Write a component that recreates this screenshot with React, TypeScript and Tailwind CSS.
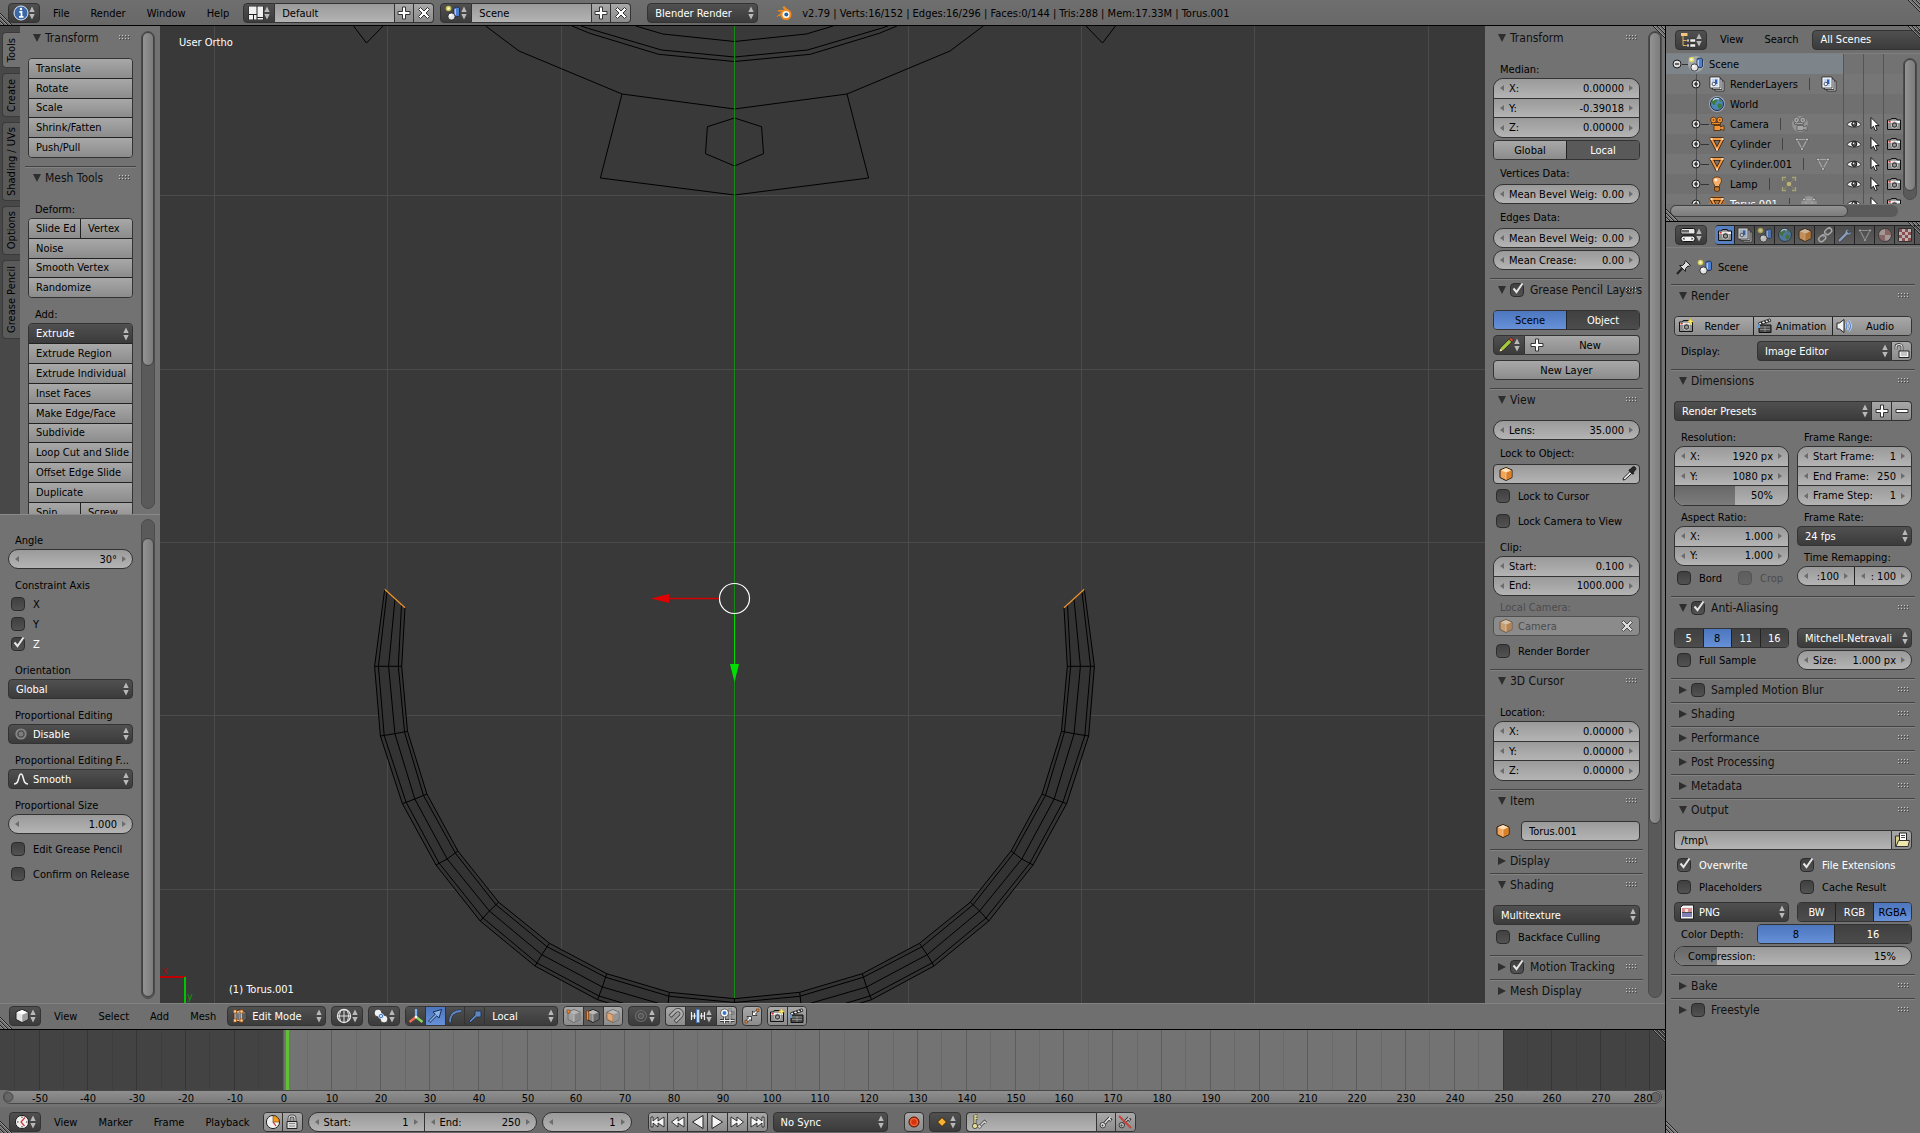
import type { ReactNode } from 'react';
import clsx from 'clsx';

/* ---------- icons ---------- */

const Svg = ({ children, className = '' }: { children: ReactNode; className?: string }) => (
  <svg viewBox="0 0 16 16" className={clsx('h-4 w-4 shrink-0', className)} fill="none" aria-hidden="true">
    {children}
  </svg>
);

const UpDown = () => (
  <svg viewBox="0 0 6 14" className="pointer-events-none h-3.5 w-1.5 shrink-0" aria-hidden="true">
    <path d="M3 .5 5.700 6H.3ZM3 13.500 5.700 8H.3Z" fill="#b9b9b9" />
  </svg>
);

const ballsAndCylinder = (
  <>
    <path d="M9 3.200c0-1.400 5.500-1.400 5.500 0v7.300c0 1.400-5.500 1.400-5.500 0z" fill="#4f7fd0" stroke="#15233f" strokeWidth=".8" />
    <path d="M10.200 4v6" stroke="#b9d0f7" strokeWidth="1.400" />
    <circle cx="6.500" cy="11.500" r="3.600" fill="#e4e4e4" stroke="#222" strokeWidth=".8" />
    <circle cx="5.500" cy="10.300" r="1.300" fill="#fff" />
    <circle cx="3.500" cy="3.500" r="2.800" fill="#f3ea5a" opacity=".75" />
    <circle cx="3.500" cy="3.500" r="1.300" fill="#fffbd0" />
  </>
);

const layers = (
  <>
    <path d="M6 5h9v10H6z" fill="#cfcfcf" stroke="#222" strokeWidth=".8" />
    <path d="M3.500 3h9.500v10.500H3.500z" fill="#e6e6e6" stroke="#222" strokeWidth=".8" />
    <path d="M1 1h10v11H1z" fill="#fff" stroke="#222" strokeWidth=".8" />
    <path d="M2.500 2.500h7v8h-7z" fill="#c3d6f2" />
    <path d="M6 3.500h2.300v4.500H6z" fill="#2d5fae" />
    <circle cx="4.800" cy="8" r="1.700" fill="#fff" stroke="#223" strokeWidth=".7" />
  </>
);

const globe = (
  <>
    <circle cx="8" cy="8" r="6.500" fill="#4d86b8" stroke="#1d2c3d" />
    <path d="M4 4c2-2 4-1 4 .5S6 6 6 8 4 9 3 7s0-2 1-3zM9 8c2-1 4 0 4 1.500S11 13 10 12.500 8 9 9 8zM10 3l2.500 1.500L11 6z" fill="#3f7a3c" />
    <path d="M4 4.500C5.500 2.500 8 2 10 3" stroke="#d5e6f5" strokeWidth="1.200" />
  </>
);

const photoCam = (
  <>
    <path d="M1.500 4h3l.8-1.500h5L11 4h3.500v9.500h-13z" fill="#8f8f8f" stroke="#111" />
    <path d="M2 4.800h12v2.200H2z" fill="#f4f4f4" />
    <circle cx="8.500" cy="9" r="3.200" fill="#3a3a3a" stroke="#ddd" strokeWidth=".8" />
    <circle cx="8.500" cy="9" r="1.500" fill="#9b9b9b" />
    <path d="M2.500 5h2.200v1.600H2.500z" fill="#e02a1f" />
  </>
);

const triMesh = (stroke: string, dot: string) => (
  <>
    <path d="M3 3.500h10L8 13z" stroke={stroke} strokeWidth="1.200" />
    <path d="M1.800 2.300h2.400v2.400H1.800zM11.800 2.300h2.400v2.400h-2.400zM6.800 11.800h2.400v2.400H6.800z" fill={dot} stroke="#333" strokeWidth=".5" />
  </>
);

const boxShape = (top: string, left: string, right: string, edge = '#2b1a08') => (
  <>
    <path d="M8 1.500 14 4v7.500L8 14.500 2 11.500V4z" fill={left} stroke={edge} />
    <path d="M8 7v7l5.500-2.800V4.500z" fill={right} />
    <path d="M8 2 13 4.200 8 6.500 3 4.200z" fill={top} />
    <path d="M8 7v6.500" stroke="#fff" opacity=".6" strokeWidth=".7" />
  </>
);

const clapper = (
  <>
    <path d="M2 7h12v7.500H2z" fill="#4a4a4a" stroke="#111" />
    <path d="M3 9h10M3 11.500h10M8 8v6" stroke="#9a9a9a" strokeWidth=".8" />
    <path d="M1.500 4.800 13 .8l.9 2.400L2.300 7.200z" fill="#f4f4f4" stroke="#111" strokeWidth=".8" />
    <path d="m4 4 1.500 2M7.500 3 9 4.800M10.500 2 12 3.500" stroke="#111" strokeWidth="1.300" />
    <path d="M1 6.500h2v3.500H1z" fill="#5a9be0" />
  </>
);

const keyShape = (c: string) => (
  <>
    <path d="m6 10 6-6.500m-1 1 2.500 2" stroke="#222" strokeWidth="3" />
    <path d="m6 10 6.500-7m-1.500 1.700 2 1.800" stroke={c} strokeWidth="1.600" />
    <circle cx="4.800" cy="11.200" r="2.700" fill={c} stroke="#222" strokeWidth=".8" />
    <circle cx="4.500" cy="11.500" r="1" fill="#444" />
  </>
);

const movieCam = (c: string, dark: string) => (
  <>
    <path d="M2.500 8.500h9v-2h-9zM5 9.500h6.500V11L15 9.500v5L11.500 13v1.500H5z" fill={c} stroke={dark} strokeWidth=".8" />
    <circle cx="4.500" cy="4" r="2.900" fill={c} stroke={dark} strokeWidth=".8" />
    <circle cx="10.800" cy="4" r="2.900" fill={c} stroke={dark} strokeWidth=".8" />
    <circle cx="4.500" cy="4" r=".8" fill={dark} />
    <circle cx="10.800" cy="4" r=".8" fill={dark} />
  </>
);

const icons = {
  info: (
    <>
      <circle cx="8" cy="8" r="7" fill="#3d68a8" stroke="#dfe8f5" />
      <path d="M6.300 6.800h2.200v4.700M6 11.800h4.500" stroke="#fff" strokeWidth="1.700" />
      <circle cx="8" cy="4" r="1.200" fill="#fff" />
    </>
  ),
  layout: (
    <>
      <path d="M.5 1h15v14H.5z" fill="#222" />
      <path d="M1 1.500h7.500V9H1zM9.500 1.500H15V12H9.500zM1 10h4v4.500H1zM6 10h2.500v4.500H6zM9.500 13H15v1.500H9.500z" fill="#f0f0f0" />
    </>
  ),
  scene: ballsAndCylinder,
  plus: <path d="M6.500 2h3v4.500H14v3H9.500V14h-3V9.500H2v-3h4.500z" fill="#fff" stroke="#333" />,
  minus: <path d="M2 6.500h12v3H2z" fill="#fff" stroke="#333" />,
  cross: <path d="m4.500 2.500 3.500 3.500 3.500-3.500 2 2L10 8l3.500 3.500-2 2L8 10l-3.500 3.500-2-2L6 8 2.500 4.500z" fill="#fff" stroke="#333" />,
  blender: (
    <>
      <path d="M0 12 6.500 6.500H2V5h7L6.500 2.500 8 1l6.500 6z" fill="#f08a1d" />
      <circle cx="10" cy="9.500" r="5.500" fill="#f08a1d" />
      <circle cx="10" cy="9.500" r="3.500" fill="#fff" />
      <circle cx="10.300" cy="9.500" r="2" fill="#27609f" />
    </>
  ),
  outliner: (
    <>
      <path d="M3 4v9.500h4M3 8.500h4" stroke="#e0b060" />
      <path d="M1 1h6.500v3H1z" fill="#f3c57d" />
      <path d="M7 7h2v3H7zM10 7h5.500v3H10zM7 12h2v3H7zM10 12h5.500v3H10z" fill="#f2f2f2" stroke="#222" strokeWidth=".5" />
    </>
  ),
  layers,
  world: globe,
  camera: movieCam('#f0953a', '#4a2503'),
  cameraData: movieCam('#a5a5a5', '#5a5a5a'),
  mesh: (
    <>
      <path d="M2.500 3h11L8 13.500z" stroke="#3a1c00" strokeWidth="3.600" strokeLinejoin="round" />
      <path d="M2.500 3h11L8 13.500z" stroke="#f29a45" strokeWidth="2" strokeLinejoin="round" />
      <path d="M1.500 2h2v2h-2zM12.500 2h2v2h-2zM7 12.500h2v2H7z" fill="#fbe0c2" />
    </>
  ),
  meshData: triMesh('#a5a5a5', '#ddd'),
  lamp: (
    <>
      <path d="M8 1c5.500 0 5 5 3 7l-.8 2.500H5.800L5 8C3 6 2.500 1 8 1z" fill="#f6b06b" stroke="#5a2f08" strokeWidth=".8" />
      <path d="M5.500 11h5v3.500l-2.500 1-2.500-1z" fill="#c07a34" stroke="#4a2503" strokeWidth=".8" />
      <circle cx="6.800" cy="4" r="1.400" fill="#fff2dd" />
    </>
  ),
  lampData: (
    <>
      <path d="m3 3 10 10M13 3 3 13" stroke="#8b8958" />
      <path d="M1.500 5V1.500H5M11 1.500h3.500V5M14.500 11v3.500H11M5 14.500H1.500V11" stroke="#a6a374" strokeWidth="1.300" />
      <circle cx="8" cy="8" r="2.800" fill="#b9b47a" stroke="#555" strokeWidth=".6" />
    </>
  ),
  eye: (
    <>
      <path d="M1 8.500C4 4 12 4 15 8.500 12 12 4 12 1 8.500z" fill="#f3f3f3" stroke="#222" strokeWidth=".9" />
      <circle cx="8.300" cy="8" r="2.500" fill="#555" stroke="#111" />
      <circle cx="7.500" cy="7.300" r=".8" fill="#fff" />
    </>
  ),
  pointer: <path d="M5 1.500v11l2.400-2.200 1.800 4.200 2-.8-1.800-4.100H13z" fill="#fff" stroke="#111" />,
  photo: photoCam,
  renderCam: (
    <>
      {photoCam}
      <path d="m12.500 0 1 2.500 2.500 1-2.500 1-1 2.500-1-2.500-2.500-1 2.500-1z" fill="#fbe96a" stroke="#b99a1b" strokeWidth=".4" />
    </>
  ),
  propsEd: (
    <>
      <rect x="1" y="1.500" width="14" height="5.500" rx="1.500" fill="#e8e8e8" stroke="#111" />
      <path d="M2 3h7v2.500H2z" fill="#666" />
      <rect x="1" y="9" width="14" height="5.500" rx="2.500" fill="#f4f4f4" stroke="#111" />
      <path d="m4.500 10.500-2 1.300 2 1.200zM11.500 10.500l2 1.300-2 1.200z" fill="#333" />
    </>
  ),
  cube: boxShape('#ffe2bd', '#f2a55a', '#d97f28'),
  cubeDim: boxShape('#d8c3a8', '#c79e73', '#b38356', '#6b5c4c'),
  view3d: boxShape('#ffffff', '#e2e2e2', '#9c9c9c', '#222'),
  editCube: (
    <>
      {boxShape('#999', '#777', '#5c5c5c', '#333')}
      <path d="M3 3.500h6.500v9H3z" stroke="#f2b27a" />
      <path d="M1.500 2h3v3h-3zM8 2h3v3H8zM1.500 11h3v3h-3zM8 11h3v3H8z" fill="#ffd9b0" stroke="#a04d06" strokeWidth=".8" />
    </>
  ),
  chain: (
    <>
      <rect x="7.500" y="2" width="7.500" height="5" rx="2.500" transform="rotate(-40 11 4.500)" stroke="#ccc" strokeWidth="1.500" />
      <rect x="1.500" y="9" width="7.500" height="5" rx="2.500" transform="rotate(-40 5 11.500)" stroke="#ccc" strokeWidth="1.500" />
      <path d="m6 10 4-4" stroke="#aaa" strokeWidth="1.400" />
    </>
  ),
  wrench: (
    <>
      <path d="M2.700 13.300 9 7" stroke="#334" strokeWidth="3.800" strokeLinecap="round" />
      <path d="M8 5.500C8 3 10 1.500 12.500 2l-2 2 .5 1.500 1.500.5 2-2C15 6.500 13 8.500 10.500 8z" fill="#9dbbe2" stroke="#334" strokeWidth=".7" />
      <path d="M2.700 13.300 9.500 6.500" stroke="#9dbbe2" strokeWidth="2.500" strokeLinecap="round" />
    </>
  ),
  material: (
    <>
      <circle cx="8" cy="8" r="6.500" fill="#c9b4b2" stroke="#2a2a2a" />
      <path d="M8 8V1.700A6.300 6.300 0 0 1 14.300 8zM8 8v6.300A6.300 6.300 0 0 1 1.700 8z" fill="#8d5552" opacity=".75" />
    </>
  ),
  texture: (
    <>
      <path d="M1.500 1.500h13v13h-13z" fill="#e6dada" stroke="#222" />
      <path d="M2 2h3v3H2zM8 2h3v3H8zM5 5h3v3H5zM11 5h3v3h-3zM2 8h3v3H2zM8 8h3v3H8zM5 11h3v3H5zM11 11h3v3h-3z" fill="#a8494a" />
    </>
  ),
  pin: (
    <>
      <path d="M1 15 6 9.500" stroke="#222" strokeWidth="2" />
      <path d="m9.500 1.500 5 5-1.500.8-1-.3-2.500 2.500v3L3.500 6.500h3L9 4l-.3-1z" fill="#ddd" stroke="#222" />
    </>
  ),
  clapper,
  speaker: (
    <>
      <path d="M1 5h2.500L8 1.500v13L3.500 11H1z" fill="#f2f2f2" stroke="#222" />
      <path d="M10 5c1.300 2 1.300 4 0 6M12.500 3c2.400 3 2.400 7 0 10" stroke="#e3eefc" strokeWidth="2.600" />
      <path d="M10 5c1.300 2 1.300 4 0 6M12.500 3c2.400 3 2.400 7 0 10" stroke="#5a8ace" strokeWidth="1.400" />
    </>
  ),
  unlock: (
    <>
      <path d="M2 6.500v-3c0-2.500 6-2.500 6 0V8" stroke="#222" strokeWidth="2.600" />
      <path d="M2 6.500v-3c0-2.500 6-2.500 6 0V8" stroke="#eee" strokeWidth="1.200" />
      <path d="M5 8h10v6.500H5z" fill="#f0f0f0" stroke="#222" />
      <path d="M7 10h6M7 12h6" stroke="#999" />
    </>
  ),
  lock: (
    <>
      <path d="M5 8V4.500c0-3.500 6-3.500 6 0V8" stroke="#333" strokeWidth="2.800" />
      <path d="M5 8V4.500c0-3.500 6-3.500 6 0V8" stroke="#ddd" strokeWidth="1.200" />
      <path d="M3 7.500h10v7H3z" fill="#ddd" stroke="#222" />
      <path d="M5 9.500h6M5 12h6" stroke="#888" />
    </>
  ),
  folder: (
    <>
      <path d="M1.500 4h4v10.500h-4z" fill="#d9cf8a" stroke="#333" />
      <path d="M5.500 1h7v8h-7z" fill="#fff" stroke="#222" />
      <path d="M7 3.500h4M7 5.500h4" stroke="#333" strokeWidth=".9" />
      <path d="M2 14.500 4.500 8.500h11l-1.500 6z" fill="#efe6ac" stroke="#333" />
    </>
  ),
  image: (
    <>
      <path d="M4 1h10.500v14H1.500V3.500z" fill="#f3f3f3" stroke="#222" />
      <path d="M3 4h10v4.500H3z" fill="#d78e8e" />
      <path d="M3 8.500h10V13H3z" fill="#7f7fb5" />
      <path d="M6 5h3v3H6z" fill="#f8dede" />
      <path d="M3 8.500h10" stroke="#333" strokeWidth=".8" />
    </>
  ),
  pencil: (
    <>
      <path d="m1.500 14.500 1.200-4L11 2.200l2.800 2.800-8.300 8.300z" fill="#a5c93d" stroke="#222" strokeWidth=".9" />
      <path d="m11 2.200 2.800 2.800L15 3.800C15.500 2 14 .5 12.200 1z" fill="#e04a3a" stroke="#222" strokeWidth=".6" />
      <path d="m1.500 14.500.8-3 2.200 2.200z" fill="#f5dcb0" />
    </>
  ),
  dropper: (
    <>
      <path d="m2 14 .5-2L9 5.500l1.800 1.800L4.200 13.500z" fill="#eee" stroke="#222" />
      <path d="m8 4.500 3.800 3.800 1-1-.8-1.200C15.500 4 15.200 2 14 1.200s-3-.4-4.500 2.300l-.6-.3z" fill="#2a2a2a" stroke="#111" />
    </>
  ),
  disc: (
    <>
      <circle cx="8" cy="8" r="5" fill="#6b6b6b" stroke="#8e8e8e" strokeWidth="1.200" />
      <circle cx="8" cy="8" r="3" fill="#7c7c7c" stroke="#4a4a4a" />
    </>
  ),
  smooth: <path d="M1 13c3.500 0 4-3 5-7s3-4 4 0 1.500 7 5 7" stroke="#f2f2f2" strokeWidth="1.500" />,
  wire: (
    <>
      <circle cx="8" cy="8" r="6.500" fill="#4b4b4b" stroke="#e8e8e8" strokeWidth="1.300" />
      <path d="M8 1.500v13M1.500 8h13M5 2.500c-2 3.500-2 7.500 0 11M11 2.500c2 3.500 2 7.500 0 11" stroke="#e0e0e0" />
    </>
  ),
  pivot: (
    <>
      <circle cx="5" cy="5" r="3.900" fill="#f1f1f1" stroke="#222" strokeWidth=".8" />
      <circle cx="11" cy="11" r="3.900" fill="#f1f1f1" stroke="#222" strokeWidth=".8" />
      <circle cx="8" cy="8" r="2.600" fill="#3c77c8" stroke="#fff" strokeWidth=".7" />
      <circle cx="8" cy="8" r="1" fill="#fff" />
    </>
  ),
  axes: (
    <>
      <path d="M8 9V1" stroke="#7cb4f5" strokeWidth="2.200" />
      <path d="m8 9-6.500 5" stroke="#ee6a55" strokeWidth="2.400" />
      <path d="m8 9 6.500 5" stroke="#86da5a" strokeWidth="2.400" />
      <circle cx="8" cy="9" r="1.300" fill="#fff" />
    </>
  ),
  arrow: <path d="m1.500 13 6.800-6.800L6 4l8.500-2.500L12 10 9.800 7.800 3 14.500z" fill="#8db4ea" stroke="#0f2347" strokeWidth=".9" />,
  arc: (
    <>
      <path d="M3 14C3 7 7 3 14 3" stroke="#1c2c45" strokeWidth="3" />
      <path d="M3 14C3 7 7 3 14 3" stroke="#5f86bd" strokeWidth="1.800" />
    </>
  ),
  scale: <path d="m2 13 6-6V3h6v6H9.500l-6 5.500z" fill="#5f86bd" stroke="#1c2c45" strokeWidth=".8" />,
  selVert: (
    <>
      {boxShape('#b5b5b5', '#a0a0a0', '#888', '#6e6e6e')}
      <path d="M1 2h3v3H1z" fill="#f08b3c" stroke="#7a3400" strokeWidth=".6" />
    </>
  ),
  selEdge: (
    <>
      {boxShape('#bbb', '#8a8a8a', '#6a6a6a', '#222')}
      <path d="M1.500 3h2v9h-2z" fill="#f08b3c" stroke="#7a3400" strokeWidth=".6" />
    </>
  ),
  selFace: (
    <>
      {boxShape('#bbb', '#a0a0a0', '#949494', '#6e6e6e')}
      <path d="m2 4.500 6 2.200v7.500l-6-3z" fill="#e0a877" stroke="#8a5528" strokeWidth=".6" />
    </>
  ),
  ring: (
    <>
      <circle cx="8" cy="8" r="5.500" stroke="#6c6c6c" strokeWidth="1.200" />
      <circle cx="8" cy="8" r="2.800" fill="#555" stroke="#777" />
    </>
  ),
  magnet: (
    <>
      <path d="m2 8.500 5.500-5.500c4-3 8 2 5 5.500L7 14" stroke="#444" strokeWidth="4" />
      <path d="m2.500 8 5-5c4-3 8 2 5 5.500L7.500 13.500" stroke="#b0b0b0" strokeWidth="2.400" />
    </>
  ),
  snap: (
    <>
      <path d="M1.500 4v8M4.500 5v6M14.500 4v8M11.500 5v6M1 8h14" stroke="#eee" strokeWidth="1.200" />
      <path d="M6.700 1.500h2.600v13H6.700z" fill="#e8f1ff" stroke="#3f7ad1" />
    </>
  ),
  snapTarget: (
    <>
      <path d="M5.500 8v7.500M11 .5v15M1 12.500h14.500M8 5h7.500" stroke="#222" strokeWidth="2.400" />
      <path d="M5.500 8v7.500M11 .5v15M1 12.500h14.500M8 5h7.500" stroke="#eee" strokeWidth="1.200" />
      <circle cx="5.500" cy="5" r="4" fill="#fff" stroke="#333" strokeWidth=".7" />
      <circle cx="5.500" cy="5" r="2" fill="#3c77c8" />
    </>
  ),
  merge: (
    <>
      <path d="M12.500 1h2.500v2.500h-2.500zM1 12.500h2.500V15H1z" fill="#f08b3c" stroke="#6a3000" strokeWidth=".6" />
      <path d="M8.500 7.500V3L10 4.500l2-2L13.500 4l-2 2L13 7.500zM7.500 8.500V13L6 11.500l-2 2L2.500 12l2-2L3 8.500z" fill="#fff" stroke="#222" strokeWidth=".8" />
    </>
  ),
  clock: (
    <>
      <circle cx="8" cy="8" r="6.600" fill="#f0f0f0" stroke="#222" />
      <path d="M11 3.500 7 8l3.500 4" stroke="#c33" strokeWidth="1.200" />
      <path d="M3 8h1.500M8 2.500V4M8 12v1.500M12 8h1.500" stroke="#333" />
    </>
  ),
  clockOrange: (
    <>
      <circle cx="8" cy="8" r="6.600" fill="#f0f0f0" stroke="#222" />
      <path d="M8 8V1.700A6.300 6.300 0 0 1 14.300 8z" fill="#f39a1f" stroke="#6b3f00" strokeWidth=".6" />
      <path d="m8 8 3 4" stroke="#c33" strokeWidth="1.200" />
    </>
  ),
  first: <path d="M1 3h2v4l5-4v4l6-4v10L8 9v4L3 9v4H1z" fill="#f4f4f4" stroke="#222" strokeWidth=".9" />,
  prevKey: <path d="M8 3v4l6-4v10L8 9v4L1.500 8z" fill="#f4f4f4" stroke="#222" strokeWidth=".9" />,
  playBack: <path d="M13 1.500v13L2.500 8z" fill="#f4f4f4" stroke="#222" />,
  play: <path d="M3 1.500v13L13.500 8z" fill="#f4f4f4" stroke="#222" />,
  nextKey: <path d="M8 3v4L2 3v10l6-4v4l6.500-5z" fill="#f4f4f4" stroke="#222" strokeWidth=".9" />,
  last: <path d="M15 3h-2v4L8 3v4L2 3v10l6-4v4l5-4v4h2z" fill="#f4f4f4" stroke="#222" strokeWidth=".9" />,
  record: (
    <>
      <circle cx="8" cy="8" r="5" fill="#d8330a" stroke="#5a1500" />
      <circle cx="8" cy="8" r="3.500" stroke="#f07a50" />
    </>
  ),
  diamond: <path d="M8 3.500 12.500 8 8 12.500 3.500 8z" fill="#f9b233" stroke="#3a2500" />,
  keySet: (
    <>
      <path d="M4 1v9M4 2h2.500M4 4.500h2.500" stroke="#333" strokeWidth="2.800" />
      <path d="M4 1v9M4 2h2.500M4 4.500h2.500" stroke="#e5df8e" strokeWidth="1.400" />
      <circle cx="4" cy="12" r="2.600" fill="#e5df8e" stroke="#333" strokeWidth=".8" />
      <path d="m9 12 4.500-4.500L15 9" stroke="#333" strokeWidth="2.800" />
      <path d="m9 12 4.500-4.500L15 9" stroke="#ddd" strokeWidth="1.500" />
      <circle cx="8.500" cy="12.500" r="1.800" fill="#ddd" stroke="#333" strokeWidth=".6" />
    </>
  ),
  key: keyShape('#e3e3e3'),
  keyDel: (
    <>
      {keyShape('#b9b9b9')}
      <path d="m2 2 12 12" stroke="#c8433a" strokeWidth="2" />
    </>
  ),
};

type IconName = keyof typeof icons;
const Icon = ({ name, className }: { name: IconName; className?: string }) => <Svg className={className}>{icons[name]}</Svg>;

/* ---------- shared styles ---------- */

const lightBtn = 'bg-linear-to-b from-[#a8a8a8] to-[#8c8c8c]';
const darkBtn = 'bg-linear-to-b from-[#404040] to-[#4c4c4c] text-white';
const menuBg = 'bg-linear-to-b from-[#505050] to-[#3b3b3b] text-white';
const fieldBg = 'bg-linear-to-b from-[#9a9a9a] to-[#b4b4b4]';
const blueBg = 'bg-linear-to-b from-[#4c76bd] to-[#6690d8] text-black';
const edge = 'border border-[#333]';

/* ---------- controls ---------- */

const Btn = ({ children, className = '' }: { children: ReactNode; className?: string }) => (
  <button type="button" className={clsx('flex h-5 items-center justify-center rounded', edge, lightBtn, className)}>
    {children}
  </button>
);

const IconMenu = ({ icon, label, className = 'rounded' }: { icon: IconName; label: string; className?: string }) => (
  <button type="button" aria-label={label} className={clsx('flex h-5 w-8 shrink-0 items-center justify-between px-1', edge, menuBg, className)}>
    <Icon name={icon} />
    <UpDown />
  </button>
);

const Select = ({ value, label, icon, className = 'w-full rounded' }: { value: string; label: string; icon?: IconName; className?: string }) => (
  <span className={clsx('relative flex h-5 min-w-0 items-center', edge, menuBg, className)}>
    {icon && <Icon name={icon} className="ml-1" />}
    <select aria-label={label} className={clsx('h-full min-w-0 flex-1 appearance-none bg-transparent pr-3 outline-none', icon ? 'pl-1' : 'pl-[7px]')}>
      <option>{value}</option>
    </select>
    <span className="pointer-events-none absolute right-[3px] flex">
      <UpDown />
    </span>
  </span>
);

const Num = ({ label, value, name, className = 'h-5 rounded-full border border-[#333]' }: { label?: string; value: string; name?: string; className?: string }) => (
  <label className={clsx('flex min-w-0 items-center px-1.5', fieldBg, className)}>
    <svg viewBox="0 0 4 6" className="h-1.5 w-1 shrink-0" aria-hidden="true"><path d="M4 0v6L0 3z" fill="#6c6c6c" /></svg>
    {label && <span className="shrink-0 pl-[5px] whitespace-nowrap">{label}</span>}
    <input aria-label={name} defaultValue={value} className="w-0 min-w-0 flex-1 bg-transparent pr-[5px] text-right outline-none" />
    <svg viewBox="0 0 4 6" className="h-1.5 w-1 shrink-0" aria-hidden="true"><path d="M0 0v6l4-3z" fill="#6c6c6c" /></svg>
  </label>
);

const NumStack = ({ rows, height }: { rows: [string, string][]; height: string }) => (
  <div className={clsx('flex flex-col divide-y divide-[#333] overflow-hidden rounded-[10px]', edge, height)}>
    {rows.map(([l, v]) => <Num key={l} label={l} value={v} className="flex-1" />)}
  </div>
);

const Box = ({ checked, disabled, label }: { checked?: boolean; disabled?: boolean; label?: string }) => (
  <span className="relative flex h-3.5 w-3.5 shrink-0">
    <input
      type="checkbox"
      aria-label={label}
      defaultChecked={checked}
      disabled={disabled}
      className="peer h-3.5 w-3.5 appearance-none rounded-[4px] border border-[#2c2c2c] bg-linear-to-b from-[#404040] to-[#525252] disabled:opacity-40"
    />
    <svg viewBox="0 0 14 14" className="pointer-events-none absolute inset-0 hidden overflow-visible peer-checked:block" aria-hidden="true">
      <path d="m3.500 5.500 3 3.500 6-8.500" fill="none" stroke="#e6e6e6" strokeWidth="2" />
    </svg>
  </span>
);

const Check = ({ label, checked, disabled }: { label: string; checked?: boolean; disabled?: boolean }) => (
  <label className={clsx('flex h-5 items-center gap-2 pl-[3px] whitespace-nowrap', checked && 'text-white', disabled && 'text-[#4c4c4c]')}>
    <Box checked={checked} disabled={disabled} />
    {label}
  </label>
);

const Label = ({ children, dim }: { children: ReactNode; dim?: boolean }) => (
  <div className={clsx('flex h-5 items-center truncate pt-0.5 pl-[7px] whitespace-nowrap', dim && 'text-[#4c4c4c]')}>{children}</div>
);

const Seg = ({ items, active, on = blueBg, off = darkBtn, className = '' }: { items: string[]; active: number; on?: string; off?: string; className?: string }) => (
  <div className={clsx('flex h-5 divide-x divide-[#222] overflow-hidden rounded', edge, className)}>
    {items.map((t, i) => (
      <button key={t} type="button" aria-pressed={i === active} className={clsx('flex-1', i === active ? on : off)}>{t}</button>
    ))}
  </div>
);

const Dots = () => (
  <svg viewBox="0 0 11 5" className="h-[5px] w-[11px] shrink-0" aria-hidden="true">
    <path d="M0 .5h11M0 3.500h11" stroke="#c4c4c4" strokeDasharray="1 2" />
    <path d="M1 1.500h10M1 4.500h10" stroke="#444" strokeDasharray="1 2" />
  </svg>
);

const Panel = ({ title, open, check, first, children }: { title: string; open?: boolean; check?: boolean; first?: boolean; children?: ReactNode }) => (
  <section>
    <header className={clsx('mx-[5px] flex h-6 items-center border-t pr-1.5 pb-0.5 pl-2', first ? 'border-transparent' : 'border-[#434343] shadow-[inset_0_1px_0_#828282]')}>
      <svg viewBox="0 0 8 8" className="h-2 w-2 shrink-0" aria-hidden="true">
        <path d={open ? 'M0 0h8L4 8z' : 'M0 0v8l8-4z'} fill="#2e2e2e" />
      </svg>
      {check !== undefined && <span className="ml-1 flex"><Box checked={check} label={title} /></span>}
      <h2 className={clsx('w-0 min-w-0 flex-1 text-xs whitespace-nowrap text-[#101010]', check === undefined ? 'pl-1' : 'pl-1.5')}>{title}</h2>
      <Dots />
    </header>
    {open && <div className="p-2">{children}</div>}
  </section>
);

/* vertical scrollbar: flex weights of lead, thumb and rest */
const VScroll = ({ lead = 0, thumb, rest }: { lead?: number; thumb: number; rest: number }) => (
  <div className="flex h-full w-3.5 shrink-0 flex-col rounded-full border border-[#4c4c4c] bg-[#5a5a5a]">
    <div style={{ flexGrow: lead }} />
    <div className="rounded-full border border-[#404040] bg-linear-to-r from-[#939393] to-[#7c7c7c]" style={{ flexGrow: thumb }} />
    <div style={{ flexGrow: rest }} />
  </div>
);

const Grip = ({ className }: { className: string }) => (
  <svg viewBox="0 0 12 12" className={clsx('pointer-events-none absolute h-3 w-3', className)} aria-hidden="true">
    <path d="M0 0l12 12M4 0l8 8M8 0l4 4" stroke="#222" />
    <path d="M1 0l11 11M5 0l7 7M9 0l3 3" stroke="#a5a5a5" strokeWidth=".7" />
  </svg>
);

const GripLow = () => (
  <svg viewBox="0 0 12 12" className="pointer-events-none absolute bottom-0 left-0 h-3 w-3" aria-hidden="true">
    <path d="M0 0l12 12M0 4l8 8M0 8l4 4" stroke="#222" />
    <path d="M0 1l11 11M0 5l7 7M0 9l3 3" stroke="#a5a5a5" strokeWidth=".7" />
  </svg>
);

const Menus = ({ items }: { items: string[] }) => (
  <nav className="ml-[3px] flex shrink-0 gap-px">
    {items.map(m => <button key={m} type="button" className="h-5 px-2.5">{m}</button>)}
  </nav>
);

const DataBlock = ({ icon, name, value }: { icon: IconName; name: string; value: string }) => (
  <div className="flex h-5">
    <IconMenu icon={icon} label={`Browse ${name}`} className="rounded-l" />
    <input aria-label={name} defaultValue={value} className={clsx('w-[119px] border-y border-[#333] px-[7px] outline-none', fieldBg)} />
    <Btn className="w-5 rounded-none"><Icon name="plus" /></Btn>
    <Btn className="w-5 rounded-l-none border-l-0"><Icon name="cross" /></Btn>
  </div>
);

const IconSeg = ({ items, className = '' }: { items: [IconName, string, string][]; className?: string }) => (
  <div className={clsx('flex h-5 shrink-0 divide-x divide-[#333] overflow-hidden rounded', edge, className)}>
    {items.map(([icon, label, bg]) => (
      <button key={label} type="button" aria-label={label} className={clsx('flex flex-1 items-center justify-center', bg)}>
        <Icon name={icon} />
      </button>
    ))}
  </div>
);

/* ---------- info bar ---------- */

const TopBar = () => (
  <header className="relative flex h-[26px] shrink-0 items-center border-b border-black bg-linear-to-b from-[#6f6f6f] to-[#686868] pt-px pl-2">
    <IconMenu icon="info" label="Editor type" />
    <Menus items={['File', 'Render', 'Window', 'Help']} />
    <div className="ml-1 flex items-center gap-1.5">
      <DataBlock icon="layout" name="Screen" value="Default" />
      <DataBlock icon="scene" name="Scene" value="Scene" />
    </div>
    <Select label="Engine" value="Blender Render" className="ml-4 w-[111px] rounded" />
    <Icon name="blender" className="ml-[18px]" />
    <p className="ml-2.5 whitespace-nowrap">v2.79 | Verts:16/152 | Edges:16/296 | Faces:0/144 | Tris:288 | Mem:17.33M | Torus.001</p>
    <GripLow />
    <Grip className="top-0 right-0" />
  </header>
);

/* ---------- tool shelf ---------- */

const tabs = [
  { name: 'Tools', size: 'h-9' },
  { name: 'Create', size: 'h-11' },
  { name: 'Shading / UVs', size: 'h-[79px]' },
  { name: 'Options', size: 'h-[49px]' },
  { name: 'Grease Pencil', size: 'h-[79px]' },
];

const row = 'flex flex-1 items-center pl-[7px] text-left whitespace-nowrap';

const ToolGroup = ({ children, height }: { children: ReactNode; height: string }) => (
  <div className={clsx('flex flex-col divide-y divide-[#222] overflow-hidden rounded', edge, height)}>{children}</div>
);

const Tool = ({ children }: { children: string }) => <button type="button" className={clsx(row, lightBtn)}>{children}</button>;

const ToolPair = ({ a, b }: { a: string; b: string }) => (
  <div className="flex flex-1 divide-x divide-[#222]">
    <button type="button" className={clsx(row, lightBtn)}>{a}</button>
    <button type="button" className={clsx(row, lightBtn)}>{b}</button>
  </div>
);

const ToolShelf = () => (
  <aside className="flex w-40 shrink-0 flex-col bg-[#727272]">
    <div className="flex h-[488px] shrink-0 overflow-hidden">
      <div className="flex w-5 shrink-0 flex-col gap-[5px] bg-[#484848] pt-1.5 pl-0.5">
        {tabs.map((t, i) => (
          <button
            key={t.name}
            type="button"
            className={clsx('flex w-full items-center justify-center rounded-l border border-r-0 border-[#3a3a3a]', t.size, i === 0 ? 'bg-[#727272]' : 'bg-[#5a5a5a]')}
          >
            <span className="rotate-180 whitespace-nowrap [writing-mode:vertical-rl]">{t.name}</span>
          </button>
        ))}
      </div>
      <div className="min-w-0 flex-1">
        <Panel title="Transform" open first>
          <ToolGroup height="h-25">
            {['Translate', 'Rotate', 'Scale', 'Shrink/Fatten', 'Push/Pull'].map(t => <Tool key={t}>{t}</Tool>)}
          </ToolGroup>
        </Panel>
        <Panel title="Mesh Tools" open>
          <Label>Deform:</Label>
          <ToolGroup height="h-20">
            <ToolPair a="Slide Ed" b="Vertex" />
            {['Noise', 'Smooth Vertex', 'Randomize'].map(t => <Tool key={t}>{t}</Tool>)}
          </ToolGroup>
          <div className="h-[5px]" />
          <Label>Add:</Label>
          <ToolGroup height="h-50">
            <div className="relative flex flex-1">
              <select aria-label="Extrude menu" className={clsx('w-full appearance-none pl-[7px] outline-none', menuBg)}>
                <option>Extrude</option>
              </select>
              <span className="absolute top-[3px] right-[3px] flex"><UpDown /></span>
            </div>
            {['Extrude Region', 'Extrude Individual', 'Inset Faces', 'Make Edge/Face', 'Subdivide', 'Loop Cut and Slide', 'Offset Edge Slide', 'Duplicate'].map(t => (
              <Tool key={t}>{t}</Tool>
            ))}
            <ToolPair a="Spin" b="Screw" />
          </ToolGroup>
        </Panel>
      </div>
      <div className="py-[5px] pr-[5px]"><VScroll thumb={333} rest={143} /></div>
    </div>

    <div className="flex min-h-0 flex-1 border-t border-[#8a8a8a]">
      <div className="flex min-w-0 flex-1 flex-col gap-[5px] px-2 pt-3.5">
        <div><Label>Angle</Label><Num name="Angle" value="30°" /></div>
        <div>
          <Label>Constraint Axis</Label>
          <Check label="X" />
          <Check label="Y" />
          <Check label="Z" checked />
        </div>
        <div><Label>Orientation</Label><Select label="Orientation" value="Global" /></div>
        <div><Label>Proportional Editing</Label><Select label="Proportional Editing" icon="disc" value="Disable" /></div>
        <div><Label>Proportional Editing F...</Label><Select label="Falloff" icon="smooth" value="Smooth" /></div>
        <div><Label>Proportional Size</Label><Num name="Proportional Size" value="1.000" /></div>
        <Check label="Edit Grease Pencil" />
        <Check label="Confirm on Release" />
      </div>
      <div className="py-1 pr-[5px]"><VScroll lead={18} thumb={460} rest={1} /></div>
    </div>
  </aside>
);

/* ---------- 3D viewport ---------- */

const CX = 734.5;
type Pt = [number, number];
const mirror = (pts: Pt[]): Pt[] => pts.map(([x, y]) => [2 * CX - x, y]);
const line = (pts: Pt[]) => pts.map(p => p.join(',')).join(' ');

// loops of the half torus, from the outside in
const loops: Pt[][] = [
  [[384.7, 589.3], [374.6, 666.3], [380.4, 736], [402.4, 803.7], [436, 865], [480.2, 921], [535, 966], [597.5, 999.7], [665, 1020], [CX, 1027]],
  [[387, 592], [378.4, 666.3], [384.2, 735.6], [406, 802], [439, 863], [483, 918], [537, 963], [599, 996], [666, 1016], [CX, 1023]],
  [[395, 599], [388.6, 666.3], [394.9, 733.7], [414.8, 799], [447.2, 859], [489.4, 911], [541.8, 954.7], [602.4, 987], [667.8, 1006], [CX, 1013]],
  [[401.5, 605], [398.3, 666.3], [404.6, 732.3], [423.5, 795.5], [455.5, 853.3], [496.2, 905], [547, 946.7], [605.8, 977.3], [669.3, 996.3], [CX, 1002.5]],
  [[405, 607.7], [401.7, 666.3], [407.5, 731.3], [426.9, 794], [457.9, 851], [498.7, 902.2], [549.5, 943.3], [606.7, 973.7], [669.3, 992.3], [CX, 998.7]],
];

const curves: Pt[][] = [
  [[353.5, 26], [366.5, 43], [383, 26]],
  [[485.7, 26], [519, 51], [622, 94], [CX, 109]],
  [[622, 94], [600.4, 178], [CX, 195]],
  [[572, 26], [589.8, 33.3], [658.7, 54.3], [CX, 61.5]],
  [[581, 26], [588.5, 28.5], [661.5, 50], [CX, 57]],
  [[635.8, 26], [662.8, 34], [CX, 41.5]],
  [[CX, 118], [707.4, 126.7], [705.5, 153.7], [CX, 166]],
];

const Viewport = () => {
  const last = loops.length - 1;
  return (
    <div className="relative min-w-0 flex-1 overflow-hidden bg-[#393939]">
      <svg viewBox="160 26 1325 977" preserveAspectRatio="xMidYMid slice" className="absolute inset-0 h-full w-full" fill="none" role="img" aria-label="3D viewport">
        <g stroke="#4b4b4b" shapeRendering="crispEdges">
          {[214, 387, 561, 908, 1081, 1254, 1428].map(x => <path key={x} d={`M${x + 0.5} 26V1003`} />)}
          {[195, 369, 542, 715, 889].map(y => <path key={y} d={`M160 ${y + 0.5}H1485`} />)}
        </g>
        {[false, true].map(flip => {
          const m = (p: Pt[]) => (flip ? mirror(p) : p);
          return (
            <g key={String(flip)} stroke="#000">
              <polygon points={line(m([...loops[0], ...[...loops[last]].reverse()]))} fill="#333" stroke="none" />
              {curves.map((c, i) => <polyline key={i} points={line(m(c))} />)}
              {loops.map((l, i) => <polyline key={i} points={line(m(l))} />)}
              {loops[0].slice(1).map((p, i) => <polyline key={i} points={line(m([p, loops[2][i + 1], loops[last][i + 1]]))} />)}
              <polyline points={line(m([loops[0][0], loops[last][0]]))} stroke="#f0932b" strokeWidth="1.200" />
            </g>
          );
        })}
        <path d={`M${CX} 26V998`} stroke="#158a15" shapeRendering="crispEdges" />
        <path d="M719 598.500H668" stroke="#d40000" strokeWidth="1.400" />
        <path d="M651 598.500 669 594v9z" fill="#e00000" />
        <path d={`M${CX} 614V664`} stroke="#00d800" />
        <path d="M734.500 682 730 664h9z" fill="#00e000" />
        <circle cx={CX} cy="598.500" r="15" stroke="#fff" strokeWidth="1.200" />
      </svg>
      <p className="absolute top-2.5 left-[19px] text-white">User Ortho</p>
      <p className="absolute bottom-[7px] left-[69px] text-white">(1) Torus.001</p>
      <svg className="absolute bottom-0 left-0 h-10 w-10" fill="none" aria-hidden="true">
        <path d="M0 14h26" stroke="#c00000" strokeWidth="2" />
        <path d="M25 14v26" stroke="#00c400" strokeWidth="2" />
        <text x="2" y="11" fill="#9b1010" fontSize="11">x</text>
        <text x="27" y="37" fill="#0a9a0a" fontSize="11">y</text>
      </svg>
    </div>
  );
};

/* ---------- properties shelf of the viewport ---------- */

const xyz = (x: string, y: string, z: string): [string, string][] => [['X:', x], ['Y:', y], ['Z:', z]];

const SideShelf = () => (
  <aside className="relative flex w-[180px] shrink-0 overflow-hidden bg-[#727272]">
    <div className="h-0 min-w-0 flex-1">
      <Panel title="Transform" open first>
        <div className="flex flex-col gap-0.5">
          <div>
            <Label>Median:</Label>
            <NumStack height="h-15" rows={xyz('0.00000', '-0.39018', '0.00000')} />
          </div>
          <Seg items={['Global', 'Local']} active={1} on="bg-[#595959] text-white" off={lightBtn} />
          <Label>Vertices Data:</Label>
          <Num label="Mean Bevel Weig:" value="0.00" />
          <Label>Edges Data:</Label>
          <Num label="Mean Bevel Weig:" value="0.00" />
          <Num label="Mean Crease:" value="0.00" />
        </div>
      </Panel>
      <Panel title="Grease Pencil Layers" open check>
        <div className="flex flex-col gap-[5px]">
          <Seg items={['Scene', 'Object']} active={0} />
          <div className="flex">
            <IconMenu icon="pencil" label="Grease pencil" className="rounded-l" />
            <button type="button" className={clsx('relative flex h-5 flex-1 items-center justify-center rounded-r border border-l-0 border-[#333] pl-4', lightBtn)}>
              <Icon name="plus" className="absolute left-1" />
              New
            </button>
          </div>
          <Btn>New Layer</Btn>
        </div>
      </Panel>
      <Panel title="View" open>
        <div className="flex flex-col gap-0.5">
          <Num label="Lens:" value="35.000" />
          <Label>Lock to Object:</Label>
          <div className={clsx('flex h-5 items-center rounded pr-0.5 pl-1', edge, fieldBg)}>
            <Icon name="cube" />
            <input aria-label="Lock to Object" className="min-w-0 flex-1 bg-transparent outline-none" />
            <Icon name="dropper" />
          </div>
          <Check label="Lock to Cursor" />
        </div>
        <div className="mt-[5px] flex flex-col gap-[5px]">
          <Check label="Lock Camera to View" />
          <div>
            <Label>Clip:</Label>
            <NumStack height="h-10" rows={[['Start:', '0.100'], ['End:', '1000.000']]} />
            <Label dim>Local Camera:</Label>
            <div className="flex h-5 items-center rounded border border-[#505050] bg-[#8b8b8b] px-1">
              <Icon name="cubeDim" />
              <input aria-label="Local Camera" disabled defaultValue="Camera" className="min-w-0 flex-1 bg-transparent pl-1 text-[#4c4c4c] outline-none" />
              <Icon name="cross" className="h-3 w-3 opacity-70" />
            </div>
          </div>
          <Check label="Render Border" />
        </div>
      </Panel>
      <Panel title="3D Cursor" open>
        <Label>Location:</Label>
        <NumStack height="h-15" rows={xyz('0.00000', '0.00000', '0.00000')} />
      </Panel>
      <Panel title="Item" open>
        <div className="flex h-5 items-center gap-2.5 pl-0.5">
          <Icon name="cube" />
          <input aria-label="Item name" defaultValue="Torus.001" className={clsx('h-5 min-w-0 flex-1 rounded px-[7px] outline-none', edge, fieldBg)} />
        </div>
      </Panel>
      <Panel title="Display" />
      <Panel title="Shading" open>
        <div className="flex flex-col gap-0.5">
          <Select label="Shading" value="Multitexture" />
          <Check label="Backface Culling" />
        </div>
      </Panel>
      <Panel title="Motion Tracking" check />
      <Panel title="Mesh Display" />
    </div>
    <div className="py-[5px] pr-[3px]"><VScroll thumb={792} rest={173} /></div>
    <Grip className="top-0 right-0" />
  </aside>
);

const ViewHeader = () => (
  <div className="relative flex h-[27px] shrink-0 items-center border-b border-black bg-[#6f6f6f] pl-[9px] shadow-[inset_0_1px_0_#828282]">
    <IconMenu icon="view3d" label="Editor type" />
    <Menus items={['View', 'Select', 'Add', 'Mesh']} />
    <div className="ml-px flex items-center gap-[5px]">
      <Select label="Mode" icon="editCube" value="Edit Mode" className="w-[99px] rounded" />
      <IconMenu icon="wire" label="Viewport shading" />
      <IconMenu icon="pivot" label="Pivot point" />
      <div className="flex">
        <IconSeg className="w-20 rounded-r-none" items={[['axes', 'Manipulator', menuBg], ['arrow', 'Translate', blueBg], ['arc', 'Rotate', menuBg], ['scale', 'Scale', menuBg]]} />
        <Select label="Orientation" value="Local" className="w-[73px] rounded-r border-l-0" />
      </div>
      <IconSeg className="w-15" items={[['selVert', 'Vertex select', lightBtn], ['selEdge', 'Edge select', 'bg-[#5a5a5a]'], ['selFace', 'Face select', lightBtn]]} />
      <IconMenu icon="ring" label="Proportional editing" />
      <div className="flex">
        <Btn className="w-5 rounded-r-none border-r-0"><Icon name="magnet" /></Btn>
        <IconMenu icon="snap" label="Snap element" className="rounded-none" />
        <Btn className="w-5 rounded-l-none border-l-0"><Icon name="snapTarget" /></Btn>
      </div>
      <Btn className="w-5"><Icon name="merge" /></Btn>
      <IconSeg className="w-10" items={[['renderCam', 'OpenGL render', lightBtn], ['clapper', 'OpenGL animation', lightBtn]]} />
    </div>
    <GripLow />
  </div>
);

/* ---------- timeline ---------- */

const frameX = (f: number) => Math.round(282.5 + f * 4.88);
const majors = Array.from({ length: 34 }, (_, i) => -50 + i * 10);

const Timeline = () => (
  <div className="relative flex h-[77px] shrink-0 flex-col bg-[#727272]">
    <svg className="h-15 w-full" shapeRendering="crispEdges" role="img" aria-label="Timeline">
      <rect x={frameX(0)} width={frameX(250) - frameX(0)} height="60" fill="#737373" />
      <rect width={frameX(0)} height="60" fill="#434343" />
      <rect x={frameX(250)} width="100%" height="60" fill="#434343" />
      {majors.map(f => (
        <g key={f} fill="#000">
          <rect x={frameX(f)} width="1" height="60" opacity=".2" />
          <rect x={frameX(f - 5)} width="1" height="60" opacity=".07" />
        </g>
      ))}
      <rect x={frameX(1) - 1} width="3" height="60" fill="#5fc22f" />
    </svg>
    <div className="mx-[3px] h-3.5 rounded-full border border-[#484848] bg-linear-to-b from-[#8f8f8f] to-[#7a7a7a]" />
    <svg className="absolute bottom-[3px] left-0 h-3.5 w-full" aria-hidden="true">
      <circle cx="8.500" cy="7" r="4.500" fill="#666" stroke="#484848" />
      <circle cx="1655.500" cy="7" r="4.500" fill="#666" stroke="#484848" />
      {majors.map(f => (
        <text key={f} x={f === 280 ? 1643 : frameX(f) + 1} y="12" textAnchor="middle" fontSize="11">{f}</text>
      ))}
    </svg>
    <Grip className="top-0 right-0" />
  </div>
);

const TimelineHeader = () => (
  <div className="relative flex h-[26px] shrink-0 items-center bg-[#6b6b6b] pt-1 pl-[9px]">
    <IconMenu icon="clock" label="Editor type" />
    <Menus items={['View', 'Marker', 'Frame', 'Playback']} />
    <div className="ml-[3px] flex items-center gap-[5px]">
      <IconSeg className="w-10" items={[['clockOrange', 'Preview range', lightBtn], ['lock', 'Lock time', lightBtn]]} />
      <div className="flex">
        <Num label="Start:" value="1" className="h-5 w-[117px] rounded-l-full border border-[#333]" />
        <Num label="End:" value="250" className="-ml-px h-5 w-[113px] rounded-r-full border border-[#333]" />
      </div>
      <Num name="Current frame" value="1" className="h-5 w-[90px] rounded-full border border-[#333]" />
    </div>
    <IconSeg
      className="ml-4 w-30"
      items={[['first', 'Jump to start', lightBtn], ['prevKey', 'Previous keyframe', lightBtn], ['playBack', 'Play reversed', lightBtn], ['play', 'Play', lightBtn], ['nextKey', 'Next keyframe', lightBtn], ['last', 'Jump to end', lightBtn]]}
    />
    <Select label="Sync" value="No Sync" className="ml-[5px] w-[115px] rounded" />
    <Btn className="ml-4 w-5"><Icon name="record" /></Btn>
    <IconMenu icon="diamond" label="Keyframe type" className="ml-[5px] rounded" />
    <div className="ml-[5px] flex">
      <label className={clsx('flex h-5 w-[130px] items-center rounded-l border border-r-0 border-[#333] px-1', fieldBg)}>
        <Icon name="keySet" />
        <input aria-label="Keying set" className="min-w-0 flex-1 bg-transparent outline-none" />
      </label>
      <IconSeg className="w-10 rounded-l-none" items={[['key', 'Insert keyframe', lightBtn], ['keyDel', 'Delete keyframe', lightBtn]]} />
    </div>
    <GripLow />
  </div>
);

/* ---------- outliner ---------- */

const Expander = ({ open }: { open?: boolean }) => (
  <svg viewBox="0 0 10 10" className="h-2.5 w-2.5 shrink-0" aria-hidden="true">
    <circle cx="5" cy="5" r="4" fill="#ddd" stroke="#1a1a1a" />
    <path d={open ? 'M3 5h4' : 'M3 5h4M5 3v4'} stroke="#111" strokeWidth="1.200" />
  </svg>
);

const tree: { name: string; icon: IconName; data?: IconName; leaf?: boolean; toggles?: boolean; selected?: boolean }[] = [
  { name: 'RenderLayers', icon: 'layers', data: 'layers' },
  { name: 'World', icon: 'world', leaf: true },
  { name: 'Camera', icon: 'camera', data: 'cameraData', toggles: true },
  { name: 'Cylinder', icon: 'mesh', data: 'meshData', toggles: true },
  { name: 'Cylinder.001', icon: 'mesh', data: 'meshData', toggles: true },
  { name: 'Lamp', icon: 'lamp', data: 'lampData', toggles: true },
  { name: 'Torus.001', icon: 'mesh', data: 'meshData', toggles: true, selected: true },
];

const toggleIcons: IconName[] = ['eye', 'pointer', 'photo'];

const RowCells = ({ filled }: { filled?: boolean }) => (
  <div className="flex">
    {toggleIcons.map(t => (
      <span key={t} className="flex h-5 w-5 items-center justify-center border-l border-[#555]">
        {filled && <button type="button" aria-label={t}><Icon name={t} /></button>}
      </span>
    ))}
  </div>
);

const Outliner = () => (
  <section className="relative flex h-[195px] shrink-0 flex-col overflow-hidden bg-[#727272]">
    <header className="flex h-7 shrink-0 items-center border-b border-[#808080] bg-[#6f6f6f] pl-[9px]">
      <IconMenu icon="outliner" label="Editor type" />
      <Menus items={['View', 'Search']} />
      <Select label="Display mode" value="All Scenes" className="ml-1 w-32 shrink-0 rounded" />
    </header>
    <div className="relative flex h-[150px] shrink-0 overflow-hidden">
      <ul className="relative h-0 min-w-0 flex-1">
        <li className="flex justify-between">
          <div className="flex h-5 flex-1 items-center bg-[#7d858b]">
            <span className="ml-1.5 flex"><Expander open /></span>
            <span className="h-px w-1.5 bg-[#333]" />
            <span className="rounded-full bg-[#a3a8ab]"><Icon name="scene" /></span>
            <span className="ml-[5px]">Scene</span>
          </div>
          <RowCells />
        </li>
        {tree.map((n, i) => (
          <li key={n.name} className={clsx('flex justify-between', i % 2 === 0 ? 'bg-[#767676]' : 'bg-[#707070]')}>
            <div className="flex h-5 min-w-0 flex-1 items-center pl-[25px]">
              <span className="flex w-2.5">{!n.leaf && <Expander />}</span>
              <span className={clsx('h-px w-2', n.leaf || i === 0 ? '' : 'bg-[#333]')} />
              <span className={clsx('rounded-full', n.leaf && 'bg-[#a0a4bd]', n.selected && 'bg-[#b8773a]')}><Icon name={n.icon} /></span>
              <span className={clsx('ml-[5px] whitespace-nowrap', n.selected && 'text-white')}>{n.name}</span>
              {n.data && (
                <>
                  <span className="mx-[11px] h-3 w-px bg-[#444]" />
                  <span className={clsx('rounded-full', (n.icon === 'camera' || n.selected) && 'bg-[#949494]')}><Icon name={n.data} /></span>
                </>
              )}
            </div>
            <RowCells filled={n.toggles} />
          </li>
        ))}
        <li aria-hidden="true" className="absolute top-5 left-[30px] h-33 w-px bg-[#333] opacity-60" />
      </ul>
      <div className="py-1 pr-[3px]"><VScroll thumb={133} rest={8} /></div>
    </div>
    <div className="pt-px pr-[22px] pl-1">
      <div className="flex h-3 rounded-full bg-[#5a5a5a]">
        <div className="h-full rounded-full border border-[#404040] bg-linear-to-b from-[#939393] to-[#7c7c7c]" style={{ width: '78%' }} />
      </div>
    </div>
    <Grip className="top-0 right-0" />
    <GripLow />
  </section>
);

/* ---------- properties editor ---------- */

const contexts: IconName[] = ['photo', 'layers', 'scene', 'world', 'cube', 'chain', 'wrench', 'meshData', 'material', 'texture'];

const renderActions: [IconName, string][] = [['renderCam', 'Render'], ['clapper', 'Animation'], ['speaker', 'Audio']];

const Properties = () => (
  <section className="relative flex min-h-0 flex-1 flex-col overflow-hidden border-t border-black bg-[#727272]">
    <header className="flex h-[26px] shrink-0 items-center border-b border-[#808080] bg-[#6f6f6f] pl-[9px]">
      <IconMenu icon="propsEd" label="Editor type" />
      <div className="ml-2 flex h-5 shrink-0 divide-x divide-[#222] overflow-hidden rounded-l border-y border-[#222]">
        {contexts.map((c, i) => (
          <button key={c} type="button" aria-label={c} className={clsx('flex w-5 items-center justify-center', i === 0 ? 'bg-[#5680c2]' : 'bg-linear-to-b from-[#4c4c4c] to-[#5c5c5c]')}>
            <Icon name={c} className={i === 0 ? '' : 'opacity-70'} />
          </button>
        ))}
        <span className="w-3 bg-[#555]" />
      </div>
    </header>
    <div className="flex h-9 shrink-0 items-center gap-[5px] pt-0.5 pl-2.5">
      <Icon name="pin" />
      <Icon name="scene" />
      <span>Scene</span>
    </div>

    <Panel title="Render" open>
      <div className="flex flex-col gap-[5px]">
        <div className={clsx('flex h-5 divide-x divide-[#222] overflow-hidden rounded', edge)}>
          {renderActions.map(([icon, t]) => (
            <button key={t} type="button" className={clsx('flex flex-1 items-center px-[3px]', lightBtn)}>
              <Icon name={icon} />
              <span className="flex-1 text-center">{t}</span>
            </button>
          ))}
        </div>
        <div className="flex items-center">
          <span className="w-[83px] shrink-0 pl-[7px]">Display:</span>
          <Select label="Display" value="Image Editor" className="flex-1 rounded-l border-r-0" />
          <Btn className="w-[21px] rounded-l-none"><Icon name="unlock" /></Btn>
        </div>
      </div>
    </Panel>

    <Panel title="Dimensions" open>
      <div className="mb-[5px] flex">
        <Select label="Render Presets" value="Render Presets" className="flex-1 rounded-l border-r-0" />
        <Btn className="w-[21px] rounded-none"><Icon name="plus" /></Btn>
        <Btn className="w-5 rounded-l-none border-l-0"><Icon name="minus" /></Btn>
      </div>
      <div className="grid grid-cols-2 gap-2">
        <div>
          <Label>Resolution:</Label>
          <div className={clsx('flex h-15 flex-col divide-y divide-[#333] overflow-hidden rounded-[10px]', edge)}>
            <Num label="X:" value="1920 px" className="flex-1" />
            <Num label="Y:" value="1080 px" className="flex-1" />
            <label className={clsx('relative flex flex-1 items-center', fieldBg)}>
              <span className="absolute inset-y-0 left-0 bg-linear-to-b from-[#686868] to-[#7c7c7c]" style={{ width: '53%' }} />
              <input aria-label="Resolution percentage" defaultValue="50%" className="relative w-full bg-transparent pr-[15px] text-right outline-none" />
            </label>
          </div>
          <Label>Aspect Ratio:</Label>
          <NumStack height="h-10" rows={[['X:', '1.000'], ['Y:', '1.000']]} />
          <div className="mt-0.5 grid grid-cols-[61px_1fr]">
            <Check label="Bord" />
            <Check label="Crop" disabled />
          </div>
        </div>
        <div>
          <Label>Frame Range:</Label>
          <NumStack height="h-15" rows={[['Start Frame:', '1'], ['End Frame:', '250'], ['Frame Step:', '1']]} />
          <Label>Frame Rate:</Label>
          <Select label="Frame Rate" value="24 fps" />
          <Label>Time Remapping:</Label>
          <div className={clsx('flex h-5 divide-x divide-[#222] overflow-hidden rounded-full', edge)}>
            <Num name="Old" value=":100" className="flex-1" />
            <Num name="New" value=": 100" className="flex-1" />
          </div>
        </div>
      </div>
    </Panel>

    <Panel title="Anti-Aliasing" open check>
      <div className="grid grid-cols-2 gap-x-2 gap-y-0.5">
        <Seg items={['5', '8', '11', '16']} active={1} />
        <Select label="Filter" value="Mitchell-Netravali" />
        <Check label="Full Sample" />
        <Num label="Size:" value="1.000 px" />
      </div>
    </Panel>

    <Panel title="Sampled Motion Blur" check={false} />
    <Panel title="Shading" />
    <Panel title="Performance" />
    <Panel title="Post Processing" />
    <Panel title="Metadata" />

    <Panel title="Output" open>
      <div className="mb-[5px] flex">
        <input aria-label="Output path" defaultValue={'/tmp\\'} className={clsx('h-5 min-w-0 flex-1 rounded-l border border-r-0 border-[#333] px-1.5 outline-none', fieldBg)} />
        <Btn className="w-[21px] rounded-l-none"><Icon name="folder" /></Btn>
      </div>
      <div className="mb-[5px] grid grid-cols-2 gap-x-2 gap-y-0.5">
        <Check label="Overwrite" checked />
        <Check label="File Extensions" checked />
        <Check label="Placeholders" />
        <Check label="Cache Result" />
      </div>
      <div className="flex flex-col gap-0.5">
        <div className="grid grid-cols-2 gap-x-2">
          <Select label="File Format" icon="image" value="PNG" />
          <Seg items={['BW', 'RGB', 'RGBA']} active={2} />
        </div>
        <div className="flex items-center">
          <span className="w-[83px] shrink-0 pl-[7px]">Color Depth:</span>
          <Seg items={['8', '16']} active={0} className="flex-1" />
        </div>
        <label className={clsx('relative flex h-5 items-center overflow-hidden rounded-full', edge, fieldBg)}>
          <span className="absolute inset-y-0 left-0 bg-linear-to-b from-[#686868] to-[#7c7c7c]" style={{ width: '18%' }} />
          <span className="relative pl-[13px]">Compression:</span>
          <input defaultValue="15%" className="relative min-w-0 flex-1 bg-transparent pr-[15px] text-right outline-none" />
        </label>
      </div>
    </Panel>

    <Panel title="Bake" />
    <Panel title="Freestyle" check={false} />
    <Grip className="top-0 right-0" />
    <GripLow />
  </section>
);

export default function App() {
  return (
    <div className="flex h-screen flex-col overflow-hidden bg-[#727272] font-['DejaVu_Sans_Condensed','DejaVu_Sans',sans-serif] text-[11px] leading-[13px] text-black">
      <TopBar />
      <div className="flex min-h-0 flex-1">
        <main className="flex min-w-0 flex-1 flex-col">
          <div className="flex min-h-0 flex-1">
            <ToolShelf />
            <Viewport />
            <SideShelf />
          </div>
          <ViewHeader />
          <Timeline />
          <TimelineHeader />
        </main>
        <div className="flex w-[255px] shrink-0 flex-col border-l border-black">
          <Outliner />
          <Properties />
        </div>
      </div>
    </div>
  );
}
